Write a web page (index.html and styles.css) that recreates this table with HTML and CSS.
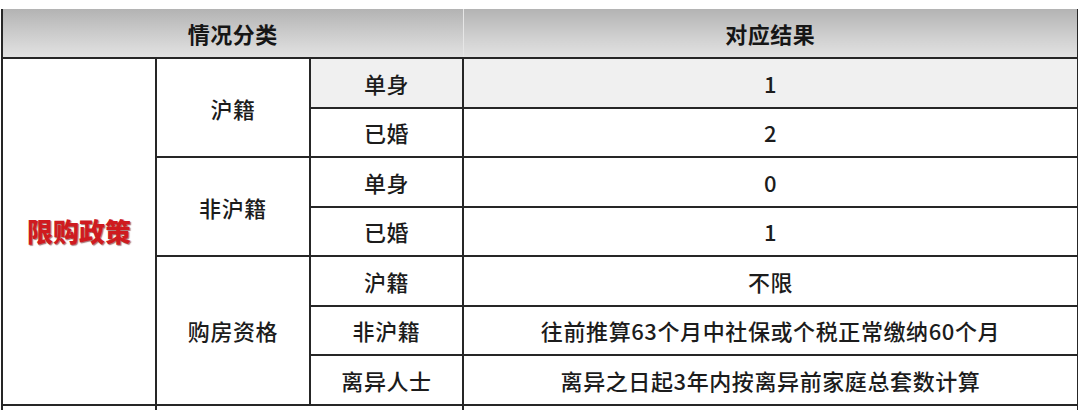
FILE: index.html
```html
<!DOCTYPE html>
<html lang="zh-CN">
<head>
<meta charset="utf-8">
<title>限购政策</title>
<link rel="stylesheet" href="styles.css">
</head>
<body>
<table class="policy">
  <colgroup>
    <col class="c1">
    <col class="c2">
    <col class="c3">
    <col class="c4">
  </colgroup>
  <thead>
    <tr class="head">
      <th colspan="3" class="h-left">情况分类</th>
      <th class="h-right">对应结果</th>
    </tr>
  </thead>
  <tbody>
    <tr class="row shade">
      <td rowspan="7" class="policy-name">限购政策</td>
      <td rowspan="2" class="cat">沪籍</td>
      <td class="sub">单身</td>
      <td class="res">1</td>
    </tr>
    <tr class="row">
      <td class="sub">已婚</td>
      <td class="res">2</td>
    </tr>
    <tr class="row">
      <td rowspan="2" class="cat">非沪籍</td>
      <td class="sub">单身</td>
      <td class="res">0</td>
    </tr>
    <tr class="row">
      <td class="sub">已婚</td>
      <td class="res">1</td>
    </tr>
    <tr class="row">
      <td rowspan="3" class="cat">购房资格</td>
      <td class="sub">沪籍</td>
      <td class="res">不限</td>
    </tr>
    <tr class="row">
      <td class="sub">非沪籍</td>
      <td class="res">往前推算63个月中社保或个税正常缴纳60个月</td>
    </tr>
    <tr class="row">
      <td class="sub">离异人士</td>
      <td class="res">离异之日起3年内按离异前家庭总套数计算</td>
    </tr>
    <tr class="row">
      <td></td>
      <td colspan="2"></td>
      <td></td>
    </tr>
  </tbody>
</table>
</body>
</html>
```

FILE: styles.css
```css
html, body {
  margin: 0;
  padding: 0;
  background: #ffffff;
}

body {
  font-family: "Noto Sans CJK SC", "Noto Sans", sans-serif;
  color: #1c1c1c;
  overflow: hidden;
}

.policy {
  margin: 9px 0 0 1px;
  width: 1076px;
  border-collapse: collapse;
  table-layout: fixed;
}

.c1 { width: 154px; }
.c2 { width: 154px; }
.c3 { width: 153px; }
.c4 { width: 615px; }

.policy th,
.policy td {
  border: 2px solid #262626;
  padding: 0;
  text-align: center;
  vertical-align: middle;
  font-size: 22px;
  line-height: 1;
}

.head {
  height: 49px;
}

.head th {
  border-top: 0;
  font-weight: 700;
  color: #161616;
  letter-spacing: 0.5px;
  background: linear-gradient(to bottom, #b3b3b3 0%, #c9c9c9 45%, #e2e2e2 100%);
}

.head .h-left {
  border-right: 1px solid #e6e6e6;
}

.head .h-right {
  border-left: 1px solid #e6e6e6;
}

.row {
  height: 49.5px;
}

.row td {
  font-weight: 500;
  letter-spacing: 0.6px;
}

.shade .sub,
.shade .res {
  background: #f0f0f0;
}

.policy-name {
  font-size: 26px !important;
  font-weight: 900 !important;
  color: #cf1b1f;
  letter-spacing: 0 !important;
  text-shadow: 1px 1px 1px rgba(90, 0, 0, 0.55);
}
```
